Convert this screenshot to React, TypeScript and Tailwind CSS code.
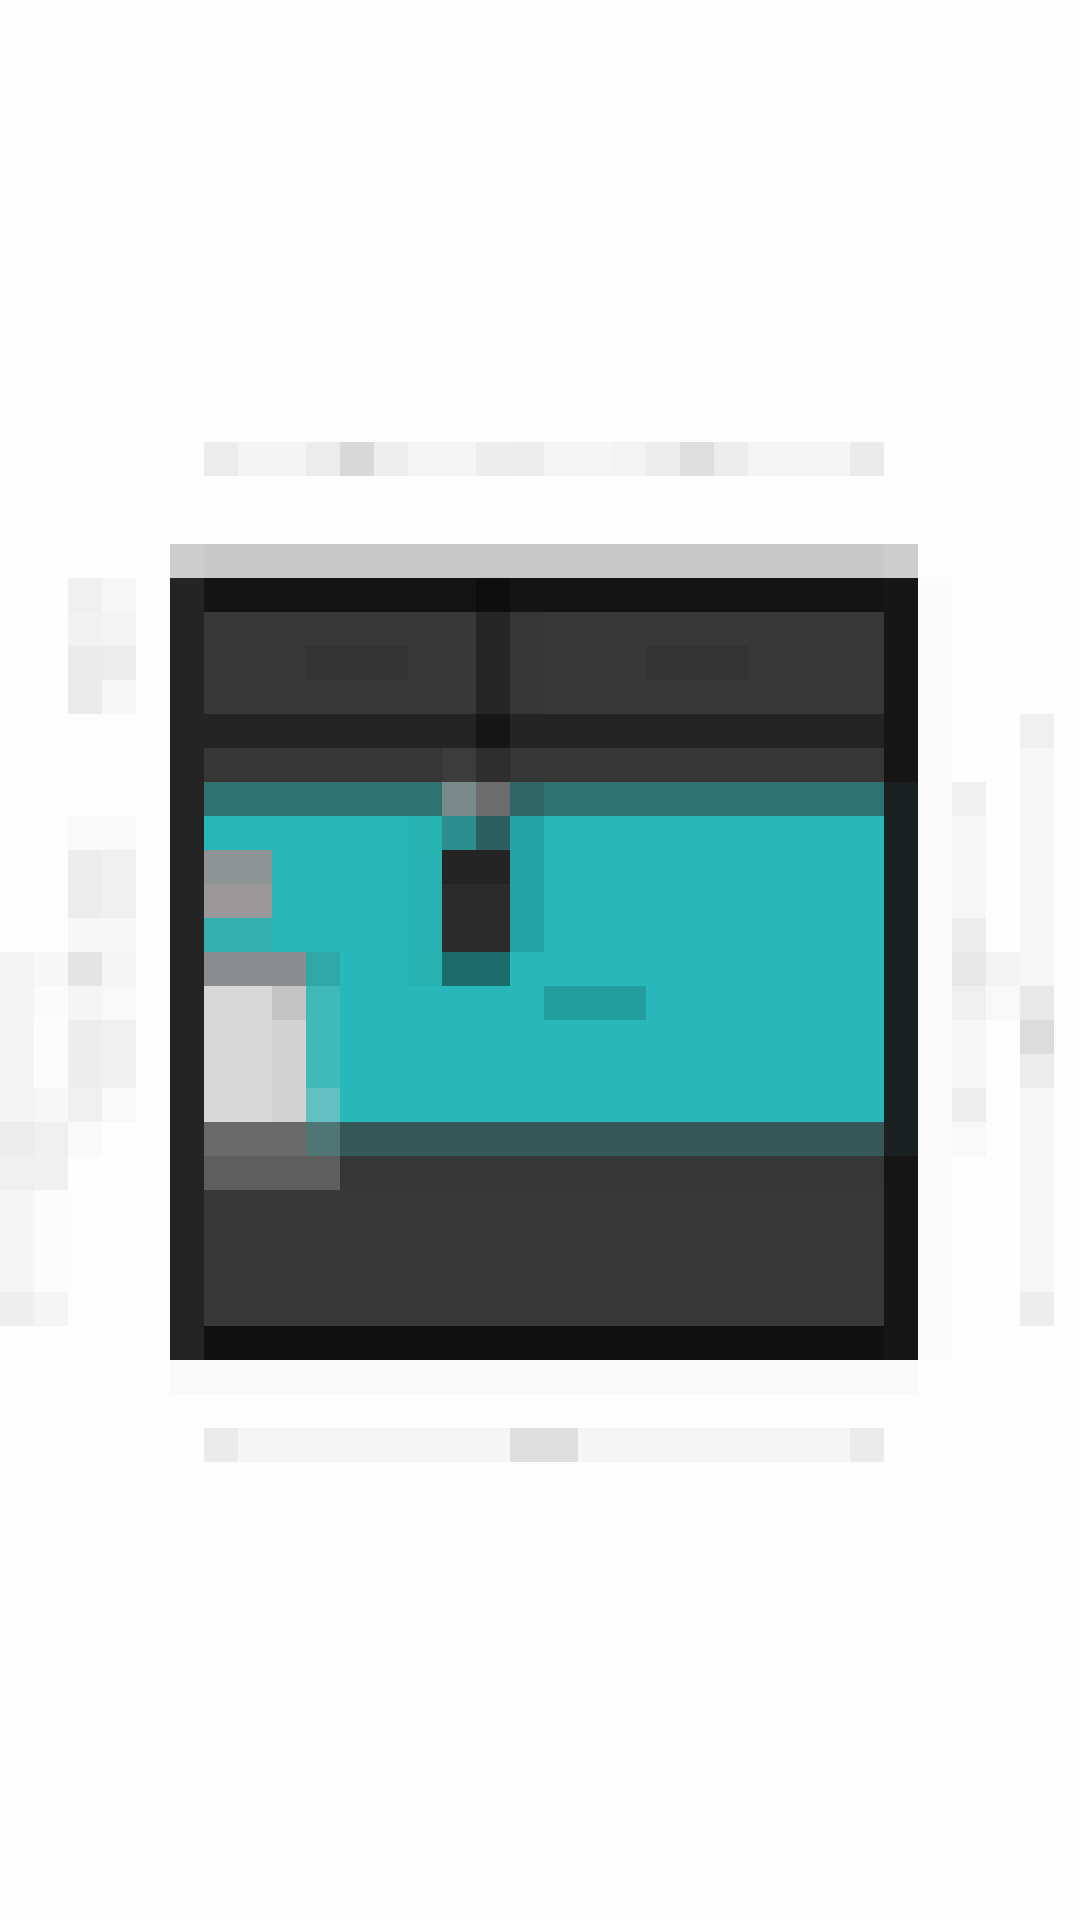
import React from "react";

type Cell = [number, number, number, number, string];

const titleRow = [
  "#ececec", "#f4f4f4", "#f4f4f4", "#ececec", "#d8d8d8", "#eeeeee", "#f5f5f5", "#f5f5f5",
  "#ededed", "#ececec", "#f5f5f5", "#f5f5f5", "#f3f3f3", "#ececec", "#dedede", "#ececec",
  "#f5f5f5", "#f5f5f5", "#f5f5f5", "#ebebeb",
];

const cells: Cell[] = [
  // title bar
  ...titleRow.map((c, i) => [6 + i, 13, 1, 1, c] as Cell),

  // panel header
  [5, 16, 22, 1, "#c8c8c8"],
  [5, 16, 1, 1, "#cdcdcd"],
  [26, 16, 1, 1, "#cdcdcd"],
  // panel side frames
  [5, 17, 1, 23, "#242424"],
  [26, 17, 1, 23, "#161616"],
  [26, 23, 1, 11, "#1a1f1f"],
  // top strip
  [6, 17, 20, 1, "#141414"],
  [14, 17, 1, 1, "#0e0e0e"],
  // top tabs
  [6, 18, 20, 3, "#383838"],
  [14, 18, 1, 3, "#262626"],
  [15, 18, 1, 3, "#363636"],
  [9, 19, 3, 1, "#333333"],
  [19, 19, 3, 1, "#333333"],
  [6, 21, 20, 1, "#242424"],
  [14, 21, 1, 1, "#161616"],
  [6, 22, 20, 1, "#363636"],
  [13, 22, 1, 1, "#3c3c3c"],
  [14, 22, 1, 1, "#2e2e2e"],
  // teal area
  [6, 23, 20, 1, "#307272"],
  [13, 23, 1, 1, "#7a8a8a"],
  [14, 23, 1, 1, "#6c6c6c"],
  [15, 23, 1, 1, "#2f6767"],
  [6, 24, 20, 9, "#29b8b9"],
  [12, 24, 1, 5, "#28b3b3"],
  [13, 24, 1, 1, "#2e8e8e"],
  [14, 24, 1, 1, "#2b5e5e"],
  [13, 25, 2, 1, "#242424"],
  [13, 26, 2, 2, "#2b2b2b"],
  [13, 28, 2, 1, "#1c6c6e"],
  [15, 24, 1, 4, "#25a3a4"],
  [6, 25, 2, 1, "#8e9494"],
  [6, 26, 2, 1, "#9a9898"],
  [6, 27, 2, 1, "#35aeae"],
  [6, 28, 3, 1, "#8a8e8e"],
  [9, 28, 1, 1, "#2fa7a7"],
  [6, 29, 3, 4, "#d8d8d8"],
  [8, 29, 1, 1, "#c4c4c4"],
  [8, 30, 1, 3, "#d3d3d3"],
  [9, 29, 1, 4, "#40b9b9"],
  [9, 32, 1, 1, "#62c0c0"],
  [16, 29, 3, 1, "#239e9e"],
  // lower rows
  [6, 33, 20, 1, "#365858"],
  [6, 33, 3, 1, "#6a6a6a"],
  [9, 33, 1, 1, "#4f7575"],
  [6, 34, 20, 1, "#363636"],
  [6, 34, 4, 1, "#5e5e5e"],
  [6, 35, 20, 4, "#383838"],
  [6, 39, 20, 1, "#111111"],
  [5, 40, 22, 1, "#f9f9f9"],

  // bottom bar
  [6, 42, 1, 1, "#ebebeb"],
  [7, 42, 8, 1, "#f5f5f5"],
  [15, 42, 2, 1, "#dedede"],
  [17, 42, 8, 1, "#f5f5f5"],
  [25, 42, 1, 1, "#ebebeb"],

  // left faint marks
  [2, 17, 1, 1, "#efefef"],
  [3, 17, 1, 1, "#f6f6f6"],
  [2, 18, 1, 1, "#f1f1f1"],
  [3, 18, 1, 1, "#f3f3f3"],
  [2, 19, 1, 2, "#ebebeb"],
  [3, 19, 1, 1, "#ececec"],
  [3, 20, 1, 1, "#f7f7f7"],
  [2, 24, 2, 1, "#f8f8f8"],
  [2, 25, 1, 2, "#ececec"],
  [3, 25, 1, 2, "#efefef"],
  [2, 27, 2, 1, "#f7f7f7"],
  [0, 28, 1, 1, "#f3f3f3"],
  [1, 28, 1, 1, "#f7f7f7"],
  [2, 28, 1, 1, "#e4e4e4"],
  [3, 28, 1, 1, "#f5f5f5"],
  [0, 29, 1, 1, "#f4f4f4"],
  [1, 29, 1, 1, "#fbfbfb"],
  [2, 29, 1, 1, "#f5f5f5"],
  [3, 29, 1, 1, "#f8f8f8"],
  [0, 30, 1, 2, "#f4f4f4"],
  [1, 30, 1, 2, "#fcfcfc"],
  [2, 30, 1, 2, "#ededed"],
  [3, 30, 1, 2, "#efefef"],
  [0, 32, 1, 1, "#f4f4f4"],
  [1, 32, 1, 1, "#f6f6f6"],
  [2, 32, 1, 1, "#efefef"],
  [3, 32, 1, 1, "#f9f9f9"],
  [0, 33, 1, 1, "#ececec"],
  [1, 33, 1, 1, "#efefef"],
  [2, 33, 1, 1, "#f9f9f9"],
  [0, 34, 1, 1, "#efefef"],
  [1, 34, 1, 1, "#f0f0f0"],
  [0, 35, 1, 3, "#f5f5f5"],
  [1, 35, 1, 3, "#fcfcfc"],
  [0, 38, 1, 1, "#eeeeee"],
  [1, 38, 1, 1, "#f5f5f5"],

  // right faint marks
  [27, 17, 1, 23, "#fbfbfb"],
  [28, 23, 1, 1, "#f0f0f0"],
  [28, 24, 1, 3, "#f6f6f6"],
  [28, 27, 1, 1, "#ededed"],
  [28, 28, 1, 1, "#e7e7e7"],
  [29, 28, 1, 1, "#f3f3f3"],
  [28, 29, 1, 1, "#efefef"],
  [29, 29, 1, 1, "#f8f8f8"],
  [28, 30, 1, 2, "#f6f6f6"],
  [28, 32, 1, 1, "#eeeeee"],
  [28, 33, 1, 1, "#f8f8f8"],
  [30, 21, 1, 1, "#efefef"],
  [30, 22, 1, 7, "#f6f6f6"],
  [30, 29, 1, 1, "#e8e8e8"],
  [30, 30, 1, 1, "#dcdcdc"],
  [30, 31, 1, 1, "#ececec"],
  [30, 32, 1, 6, "#f6f6f6"],
  [30, 38, 1, 1, "#ededed"],
];

export default function App() {
  return (
    <div className="w-[1080px] h-[1920px] overflow-hidden bg-[#fdfdfd]">
      <div className="grid grid-cols-[repeat(32,34px)] grid-rows-[repeat(57,34px)]">
        {cells.map(([c, r, w, h, color], i) => (
          <div
            key={i}
            style={{
              gridColumn: `${c + 1} / span ${w}`,
              gridRow: `${r + 1} / span ${h}`,
              backgroundColor: color,
            }}
          />
        ))}
      </div>
    </div>
  );
}
